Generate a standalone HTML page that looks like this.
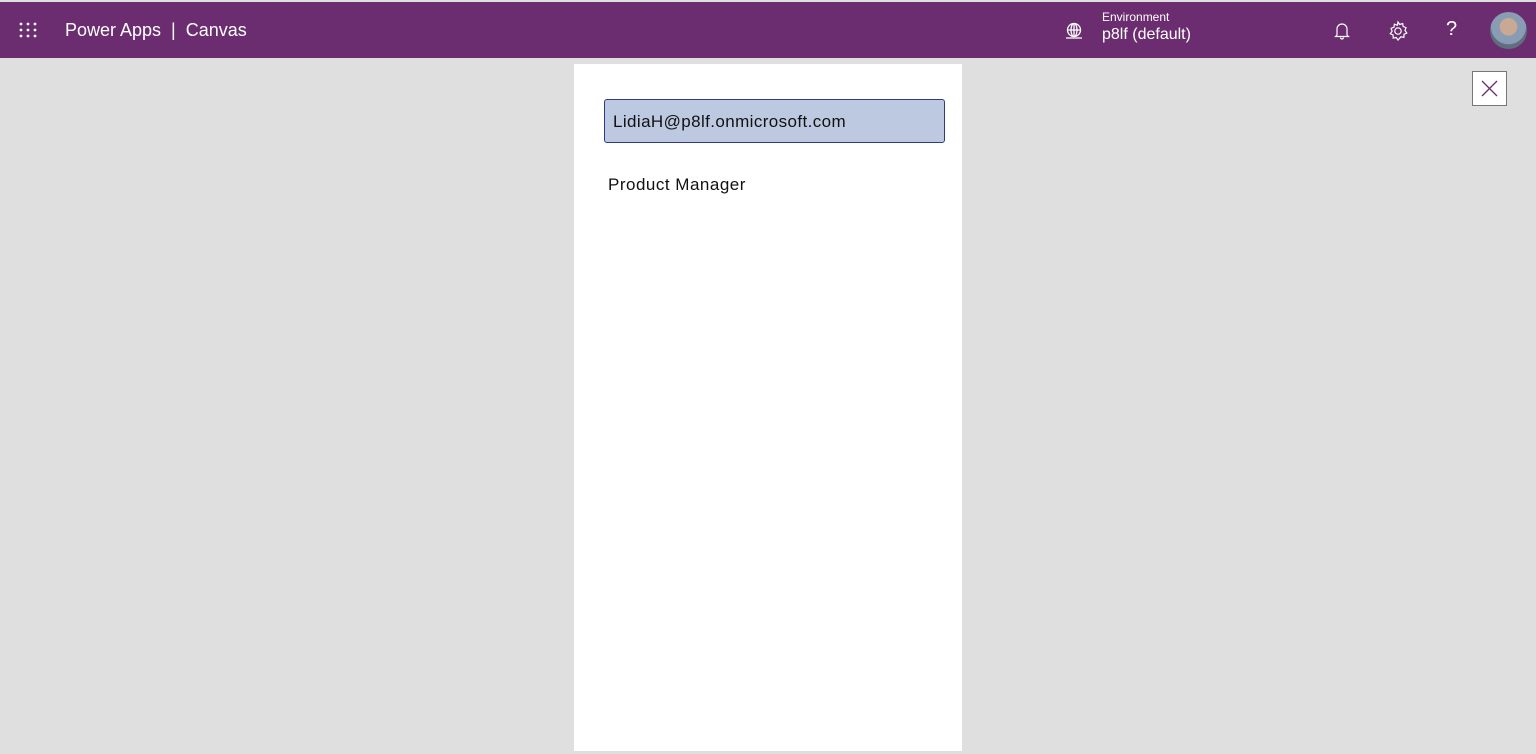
<!DOCTYPE html>
<html><head><style>
*{margin:0;padding:0;box-sizing:border-box}
body{width:1536px;height:754px;background:#dfdfdf;font-family:"Liberation Sans",sans-serif;position:relative;overflow:hidden}
.top{position:absolute;left:0;top:2px;width:1536px;height:56px;background:#6b2d6f;color:#fff}
.t{position:absolute;white-space:nowrap}
.panel{position:absolute;left:574px;top:64px;width:388px;height:687px;background:#fff}
.inp{position:absolute;left:604px;top:99px;width:341px;height:44px;background:#bdc9e1;border:1.5px solid #2e3b80;border-radius:3px;font-size:17px;letter-spacing:0.4px;padding:12px 0 0 8px;color:#111}
</style></head><body>
<div class="top">
 <svg class="t" style="left:18px;top:20px" width="20" height="16"><g fill="#fff">
 <circle cx="3" cy="2" r="1.4"/><circle cx="10" cy="2" r="1.4"/><circle cx="17" cy="2" r="1.4"/>
 <circle cx="3" cy="8" r="1.4"/><circle cx="10" cy="8" r="1.4"/><circle cx="17" cy="8" r="1.4"/>
 <circle cx="3" cy="14" r="1.4"/><circle cx="10" cy="14" r="1.4"/><circle cx="17" cy="14" r="1.4"/></g></svg>
 <div class="t" style="left:65px;top:18px;font-size:18px">Power Apps &nbsp;|&nbsp; Canvas</div>
 <svg class="t" style="left:1064px;top:20px" width="20" height="18" fill="none" stroke="#fff" stroke-width="1.3">
 <circle cx="10" cy="8" r="6.5"/><ellipse cx="10" cy="8" rx="3" ry="6.5"/><path d="M3.5 8h13M10 1.5v13M2 16h16"/></svg>
 <div class="t" style="left:1102px;top:8px;font-size:12px">Environment</div>
 <div class="t" style="left:1102px;top:24px;font-size:16px">p8lf (default)</div>
 <svg class="t" style="left:1334px;top:19px" width="16" height="20" fill="none" stroke="#fff" stroke-width="1.2">
 <path d="M3 14V8a5 5 0 0 1 10 0v6l1.5 1.5h-13zM6.5 16.5a1.5 1.5 0 0 0 3 0"/></svg>
 <svg class="t" style="left:1387px;top:18px" width="22" height="22" fill="none" stroke="#fff" stroke-width="1.2">
 <circle cx="11" cy="11" r="3.2"/><path d="M11 2l1.7 2.5 3-1 .4 3 2.9 1.1-1 2.9 1.8 2.5-2.8 1.3-.1 3.1-3-.6L11 20l-1.8-2.5-3 .6-.1-3.1-2.8-1.3 1.8-2.5-1-2.9 2.9-1.1.4-3 3 1z"/></svg>
 <div class="t" style="left:1446px;top:16px;font-size:20px;font-weight:300">?</div>
 <div class="t" style="left:1490px;top:10px;width:37px;height:37px;border-radius:50%;background:radial-gradient(circle at 50% 40%,#c9a894 0 30%,#8a9cb3 31% 60%,#5f6f80 61%)"></div>
</div>
<div class="t" style="left:1472px;top:71px;width:35px;height:35px;background:#fff;border:1px solid #777"></div>
<svg class="t" style="left:1481px;top:80px" width="17" height="17" stroke="#6b2d6f" stroke-width="1.3"><path d="M1 1l15 15M16 1L1 16"/></svg>
<div class="panel"></div>
<div class="inp">LidiaH@p8lf.onmicrosoft.com</div>
<div class="t" style="left:608px;top:175px;font-size:17px;letter-spacing:0.5px;color:#111">Product Manager</div>
</body></html>
